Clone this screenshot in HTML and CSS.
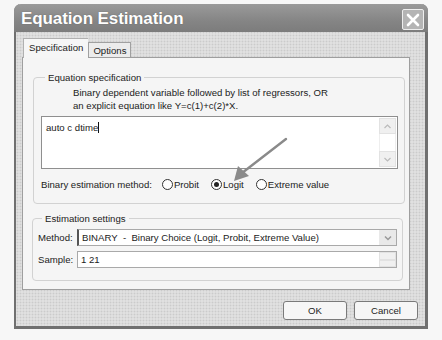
FILE: index.html
```html
<!DOCTYPE html>
<html lang="en">
<head>
  <meta charset="UTF-8">
  <title>Equation Estimation</title>
  <link rel="stylesheet" href="styles.css">
</head>
<body>
  <div class="window">
    <div class="titlebar">
      <span class="title">Equation Estimation</span>
      <span class="close">
        <svg width="14" height="14" viewBox="0 0 14 14"><path d="M2 2L12 12M12 2L2 12" stroke="#fff" stroke-width="2.6" stroke-linecap="round"/></svg>
      </span>
    </div>

    <div class="body">
      <div class="tabs">
        <div class="tab active">Specification</div>
        <div class="tab">Options</div>
      </div>

      <div class="panel">
        <fieldset class="group spec">
          <legend>Equation specification</legend>
          <p class="hint">Binary dependent variable followed by list of regressors, OR<br>an explicit equation like Y=c(1)+c(2)*X.</p>
          <div class="textarea">
            <div class="text">auto c dtime<span class="caret"></span></div>
            <div class="vscroll">
              <span class="sbtn">
                <svg width="7" height="5" viewBox="0 0 7 5"><path d="M0.5 4L3.5 1L6.5 4" fill="none" stroke="#bbb" stroke-width="1.2"/></svg>
              </span>
              <span class="strack"></span>
              <span class="sbtn">
                <svg width="7" height="5" viewBox="0 0 7 5"><path d="M0.5 1L3.5 4L6.5 1" fill="none" stroke="#bbb" stroke-width="1.2"/></svg>
              </span>
            </div>
          </div>
          <div class="radios">
            <span class="radios-label">Binary estimation method:</span>
            <span class="radio"><span class="dot"></span>Probit</span>
            <span class="radio"><span class="dot on"></span>Logit</span>
            <span class="radio"><span class="dot"></span>Extreme value</span>
          </div>
        </fieldset>

        <fieldset class="group settings">
          <legend>Estimation settings</legend>
          <div class="row">
            <span class="row-label">Method:</span>
            <div class="combo">
              <span class="combo-text">BINARY&nbsp; - &nbsp;Binary Choice (Logit, Probit, Extreme Value)</span>
              <span class="combo-btn">
                <svg width="8" height="6" viewBox="0 0 8 6"><path d="M1 1.5L4 4.5L7 1.5" fill="none" stroke="#999" stroke-width="1.5"/></svg>
              </span>
            </div>
          </div>
          <div class="row">
            <span class="row-label">Sample:</span>
            <div class="field">
              <span class="field-text">1 21</span>
              <span class="spin"><span></span><span></span></span>
            </div>
          </div>
        </fieldset>
      </div>

      <div class="buttons">
        <button class="btn">OK</button>
        <button class="btn">Cancel</button>
      </div>
    </div>

    <!-- annotation arrow drawn over the dialog -->
    <svg class="arrow" width="70" height="60" viewBox="0 0 70 60">
      <path d="M62 4L18 38" stroke="#8a8a8a" stroke-width="2.4" stroke-linecap="round"/>
      <path d="M10 46L14 31L25 41Z" fill="#8a8a8a"/>
    </svg>
  </div>
</body>
</html>
```

FILE: styles.css
```css
* { margin: 0; padding: 0; box-sizing: border-box; }
html, body { width: 100%; height: 100%; }
body {
  background: #f7f7f7;
  font-family: "Liberation Sans", Arial, sans-serif;
  font-size: 9.6px;
  color: #222;
}

.window {
  position: relative;
  width: 414px;
  height: 325px;
  margin: 4px 0 0 14px;
  border: 2px solid #707070;
  border-top: none;
  border-right-width: 3px;
  border-bottom-width: 3px;
  border-radius: 7px 7px 0 0;
  background-color: #e0e0e0;
  background-image: radial-gradient(circle, #cbcbcb 0.8px, transparent 1.1px);
  background-size: 3px 3px;
  display: flex;
  flex-direction: column;
}

.titlebar {
  height: 28px;
  margin: 0 -3px 0 -2px;
  border-radius: 7px 7px 0 0;
  background: linear-gradient(#9a9a9a, #858585 60%, #7c7c7c);
  display: flex;
  align-items: center;
  justify-content: space-between;
  padding: 0 4px 0 7px;
}
.title {
  color: #fff;
  font-weight: bold;
  font-size: 17px;
  letter-spacing: -0.1px;
  text-shadow: 0 0 1px #555;
  margin-top: 2px;
}
.close {
  width: 22px;
  height: 21px;
  margin-top: 3px;
  border: 1px solid #eee;
  border-radius: 2px;
  background: #b4b4b4;
  display: flex;
  align-items: center;
  justify-content: center;
}

.body {
  flex: 1;
  padding: 6px 7px 0 6px;
  display: flex;
  flex-direction: column;
}

.tabs {
  display: flex;
  align-items: flex-end;
  height: 19px;
  padding-left: 1px;
  position: relative;
  z-index: 1;
}
.tab {
  height: 15px;
  padding: 0 4px;
  border: 1px solid #a0a0a0;
  border-bottom: none;
  background: #ececec;
  display: flex;
  align-items: center;
}
.tab.active {
  height: 20px;
  margin-bottom: -1px;
  padding: 0 5px 3px;
  background: #f6f6f6;
  border-color: #b0b0b0;
  border-right: none;
}

.panel {
  width: 388px;
  height: 233px;
  border: 1px solid #9e9e9e;
  background: #f5f5f5;
  padding: 13px 4px 0 10px;
  display: flex;
  flex-direction: column;
}

.group {
  border: 1px solid #d2d2d2;
  border-radius: 4px;
}
.group legend {
  padding: 0 3px;
  margin-left: 4px;
  line-height: 13px;
  color: #222;
}
.spec {
  width: 372px;
  height: 133px;
  padding: 2px 6px 0 7px;
}
.hint {
  margin-left: 32px;
  line-height: 13px;
}
.textarea {
  margin-top: 4px;
  height: 53px;
  border: 1px solid #8f8f8f;
  background: #fff;
  display: flex;
}
.text {
  flex: 1;
  padding: 5px 4px;
}
.caret {
  display: inline-block;
  width: 1px;
  height: 11px;
  background: #111;
  vertical-align: -2px;
}
.vscroll {
  width: 17px;
  margin: 1px 1px 1px 0;
  display: flex;
  flex-direction: column;
  background: #f4f4f4;
}
.sbtn {
  height: 16px;
  display: flex;
  align-items: center;
  justify-content: center;
  border: 1px solid #e2e2e2;
  background: #f0f0f0;
}
.strack { flex: 1; border-left: 1px solid #eee; border-right: 1px solid #eee; background: #fff; }

.radios {
  display: flex;
  align-items: center;
  height: 28px;
  padding-top: 2px;
}
.radios-label { margin-right: 10px; }
.radio {
  display: flex;
  align-items: center;
  margin-right: 12px;
}
.dot {
  width: 11px;
  height: 11px;
  border: 1px solid #333;
  border-radius: 50%;
  margin-right: 1px;
  background: #fff;
  display: flex;
  align-items: center;
  justify-content: center;
}
.dot.on::after {
  content: "";
  width: 5px;
  height: 5px;
  border-radius: 50%;
  background: #222;
}

.settings {
  width: 371px;
  height: 69px;
  margin-top: 8px;
  margin-left: -1px;
  padding: 4px 5px 0 5px;
}
.row {
  display: flex;
  align-items: center;
  margin-bottom: 5px;
}
.row-label { width: 39px; }
.combo, .field {
  flex: 1;
  height: 17px;
  display: flex;
  align-items: center;
  background: #fff;
  border: 1px solid #a9a9a9;
}
.combo { border-left: 2px solid #555; }
.combo-text, .field-text { flex: 1; padding-left: 3px; }
.combo-btn {
  width: 17px;
  height: 15px;
  background: #e9e9e9;
  display: flex;
  align-items: center;
  justify-content: center;
}
.spin {
  width: 17px;
  height: 15px;
  display: flex;
  flex-direction: column;
  background: #f0f0f0;
}
.spin span { flex: 1; border: 1px solid #e2e2e2; }

.buttons {
  display: flex;
  justify-content: flex-end;
  gap: 7px;
  margin-top: 11px;
}
.btn {
  width: 64px;
  height: 19px;
  font: inherit;
  color: #222;
  background: #f6f6f6;
  border: 1px solid #7a7a7a;
  border-radius: 3px;
}

.arrow {
  position: absolute;
  left: 208px;
  top: 131px;
  filter: blur(0.5px);
}
```
